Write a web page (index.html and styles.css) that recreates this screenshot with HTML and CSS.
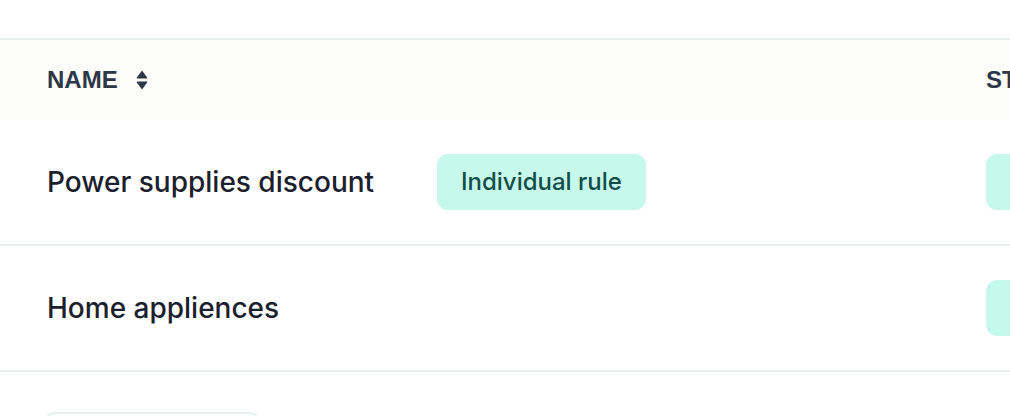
FILE: index.html
```html
<!DOCTYPE html>
<html lang="en">
<head>
  <meta charset="UTF-8" />
  <title>Discount rules</title>
  <link rel="stylesheet" href="styles.css">
</head>
<body>

  <table class="rules">
    <colgroup>
      <col class="col-name">
      <col class="col-type">
      <col class="col-status">
    </colgroup>
    <thead>
      <tr>
        <th>
          <span class="th-label">NAME</span>
          <svg class="sort-icon" width="12" height="20" viewBox="0 0 12 20">
            <path d="M6 0.5 L11.2 7.6 Q11.6 8.5 10.6 8.5 L1.4 8.5 Q0.4 8.5 0.8 7.6 Z" fill="currentColor"/>
            <path d="M6 19.5 L11.2 12.4 Q11.6 11.5 10.6 11.5 L1.4 11.5 Q0.4 11.5 0.8 12.4 Z" fill="currentColor"/>
          </svg>
        </th>
        <th></th>
        <th><span class="th-label">STATUS</span></th>
      </tr>
    </thead>
    <tbody>
      <tr>
        <td class="name">Power supplies discount</td>
        <td><span class="badge">Individual rule</span></td>
        <td><span class="badge">Active</span></td>
      </tr>
      <tr>
        <td class="name">Home appliences</td>
        <td></td>
        <td><span class="badge">Active</span></td>
      </tr>
    </tbody>
  </table>

  <div class="footer">
    <button class="btn-outline">Add new rule</button>
  </div>

</body>
</html>
```

FILE: styles.css
```css
body {
  margin: 0;
  background: #ffffff;
  font-family: Inter, "Noto Sans", sans-serif;
  overflow: hidden;
}

.rules {
  margin-top: 38px;
  width: 1290px;
  table-layout: fixed;
  border-collapse: collapse;
  border-top: 2px solid #e9edf0;
}

.col-name {
  width: 437px;
}

.col-type {
  width: 549px;
}

.col-status {
  width: 304px;
}

th {
  height: 80px;
  padding: 0;
  background: #fcfcfa;
  text-align: left;
  color: #2d3748;
}

th:first-child {
  padding-left: 47px;
}

.th-label {
  font-family: "Liberation Sans", Arial, sans-serif;
  font-weight: bold;
  font-size: 24px;
  vertical-align: middle;
}

.sort-icon {
  margin-left: 15px;
  vertical-align: middle;
  color: #2d3748;
}

td {
  height: 124px;
  padding: 0;
  border-bottom: 2px solid #e9edf0;
}

td.name {
  padding-left: 47px;
  font-size: 28px;
  font-weight: 500;
  color: #1a202c;
}

.badge {
  display: inline-block;
  height: 56px;
  line-height: 56px;
  padding: 0 24px;
  border-radius: 11px;
  background: #c6f8ec;
  color: #134e48;
  font-size: 24px;
  font-weight: 500;
}

.footer {
  padding: 40px 43px;
}

.btn-outline {
  width: 218px;
  height: 52px;
  background: #fff;
  border: 2px solid #e9edf0;
  border-radius: 12px;
  font-family: Inter, sans-serif;
  font-size: 20px;
  color: #1a202c;
}
```
